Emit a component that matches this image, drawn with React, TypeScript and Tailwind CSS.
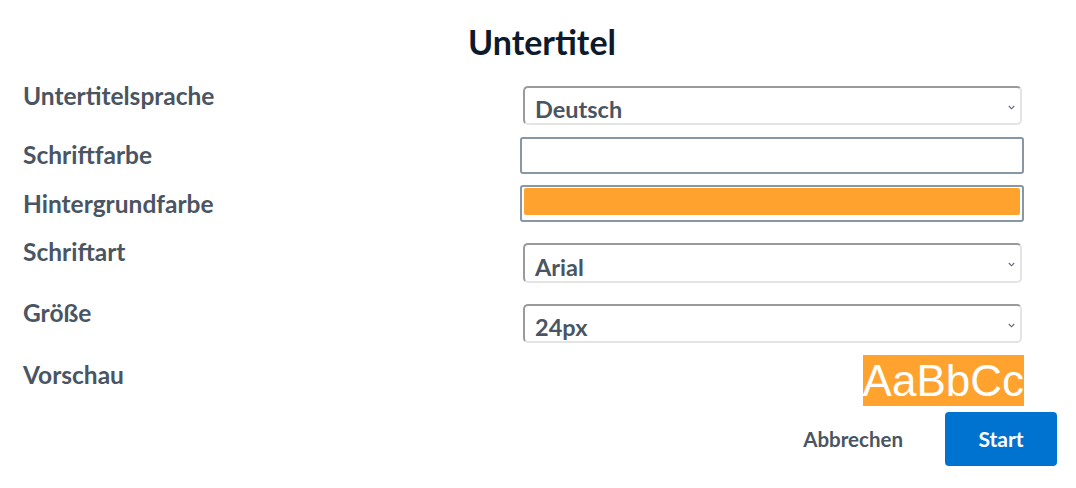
import React from "react";

const Chevron = () => (
  <svg width="7" height="5" viewBox="0 0 7 5" className="absolute right-[5px] top-[17px]">
    <path d="M0.8 1 L3.5 3.8 L6.2 1" fill="none" stroke="#5b6673" strokeWidth="1.1" />
  </svg>
);

const FakeSelect = ({ value, h }: { value: string; h: string }) => (
  <div
    className={`relative ml-[3px] w-[499px] ${h} rounded-[5px] border-2 border-t-[#9a9a9a] border-l-[#9a9a9a] border-b-[#e4e4e4] border-r-[#e4e4e4] bg-white flex items-center pl-[10px] pt-[9px] text-[23.5px] font-bold text-[#4a5563]`}
  >
    {value}
    <Chevron />
  </div>
);

const label = "w-[497px] text-[24.5px] leading-[28px] font-bold text-[#4a5563]";

export default function App() {
  return (
    <div className="w-[1076px] h-[488px] bg-white font-['Lato',sans-serif] overflow-hidden">
      <h1 className="pt-[22px] pl-[8px] text-center text-[34px] leading-[40px] font-bold text-[#0c1a2b]">
        Untertitel
      </h1>
      <div className="pl-[23px]">
        {/* Row 1 */}
        <div className="mt-[24px] flex items-start">
          <div className={`${label} mt-[-4px]`}>Untertitelsprache</div>
          <FakeSelect value="Deutsch" h="h-[39px]" />
        </div>
        {/* Row 2 */}
        <div className="mt-[12px] flex items-start">
          <div className={`${label} mt-[4px]`}>Schriftfarbe</div>
          <div className="w-[504px] h-[37px] rounded-[3px] border-2 border-[#8797a3] bg-white" />
        </div>
        {/* Row 3 */}
        <div className="mt-[11px] flex items-start">
          <div className={`${label} mt-[5px]`}>Hintergrundfarbe</div>
          <div className="w-[504px] h-[37px] rounded-[3px] border-2 border-[#8797a3] bg-white pt-[1px] px-[2px] pb-[5px]">
            <div className="w-full h-full rounded-[2px] bg-[#ffa22e]" />
          </div>
        </div>
        {/* Row 4 */}
        <div className="mt-[21px] flex items-start">
          <div className={`${label} mt-[-5px]`}>Schriftart</div>
          <FakeSelect value="Arial" h="h-[40px]" />
        </div>
        {/* Row 5 */}
        <div className="mt-[21px] flex items-start">
          <div className={`${label} mt-[-5px]`}>Größe</div>
          <FakeSelect value="24px" h="h-[39px]" />
        </div>
        {/* Row 6 */}
        <div className="mt-[12px] flex items-start">
          <div className={`${label} mt-[6px]`}>Vorschau</div>
          <div className="w-[504px] flex justify-end">
            <span className="bg-[#ffa22e] text-white font-['Liberation_Sans',Arial,sans-serif] text-[44px] leading-[51px]">
              AaBbCc
            </span>
          </div>
        </div>
      </div>
      {/* Buttons */}
      <div className="mt-[6px] pr-[19px] flex justify-end items-center">
        <button className="mr-[42px] text-[20.5px] font-bold text-[#4a5563] bg-transparent">Abbrechen</button>
        <button className="w-[112px] h-[54px] rounded-[4px] bg-[#0073d1] text-white text-[21px] font-bold">Start</button>
      </div>
    </div>
  );
}
